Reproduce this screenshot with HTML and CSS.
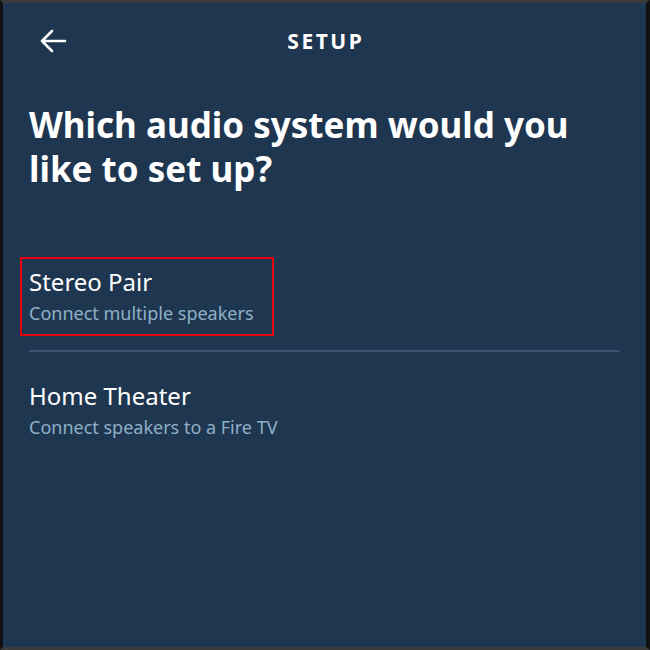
FILE: index.html
```html
<!DOCTYPE html>
<html lang="en">
<head>
    <meta charset="UTF-8">
    <meta name="viewport" content="width=device-width, initial-scale=1.0">
    <title>Setup</title>
    <link rel="stylesheet" href="styles.css">
</head>
<body>
    <div class="screen">
        <div class="top-bar">
            <button class="back-button" aria-label="Back">
                <svg width="28" height="24" viewBox="0 0 28 24">
                    <path d="M26 12H3M13 2L3 12l10 10" fill="none" stroke="#fff" stroke-width="2.6" stroke-linecap="round" stroke-linejoin="round"/>
                </svg>
            </button>
            <div class="top-title">SETUP</div>
            <div class="top-spacer"></div>
        </div>
        <h1 class="question">Which audio system would you like to set up?</h1>
        <div class="option-list">
            <div class="option highlighted">
                <div class="option-title">Stereo Pair</div>
                <div class="option-sub">Connect multiple speakers</div>
            </div>
            <div class="divider"></div>
            <div class="option">
                <div class="option-title">Home Theater</div>
                <div class="option-sub">Connect speakers to a Fire TV</div>
            </div>
        </div>
    </div>
</body>
</html>
```
FILE: styles.css
```css
body {
    margin: 0;
    padding: 0;
    background: #1f3650;
    font-family: "Noto Sans", "Open Sans", sans-serif;
}
.screen {
    box-sizing: border-box;
    width: 650px;
    height: 650px;
    border-top: 3px solid #3a3a3a;
    border-left: 3px solid #111;
    border-right: 4px solid #111;
    border-bottom: 3px solid #3a3a3a;
    background: #1f3650;
    color: #fff;
    padding: 0 26px;
}
.top-bar {
    display: flex;
    align-items: center;
    justify-content: space-between;
    height: 76px;
}
.back-button {
    background: none;
    border: none;
    padding: 0;
    margin-left: 10px;
    width: 28px;
    height: 24px;
    cursor: pointer;
}
.top-spacer {
    width: 38px;
}
.top-title {
    font-size: 21px;
    font-weight: 700;
    letter-spacing: 2.5px;
    margin-right: -2.5px;
}
.question {
    margin: 24px 0 0 0;
    font-size: 35px;
    line-height: 44px;
    font-weight: 700;
}
.option-list {
    margin-top: 66px;
}
.option {
    padding: 0;
}
.option.highlighted {
    border: 2px solid #e3000f;
    margin-left: -9px;
    padding: 9px 18px 8px 7px;
    width: fit-content;
}
.option-title {
    font-size: 24px;
    line-height: 28px;
}
.option-sub {
    margin-top: 4px;
    font-size: 18px;
    line-height: 26px;
    color: #8eb0c7;
}
.divider {
    height: 2px;
    background: #3a536e;
    margin: 14px 0 30px 0;
}
```
